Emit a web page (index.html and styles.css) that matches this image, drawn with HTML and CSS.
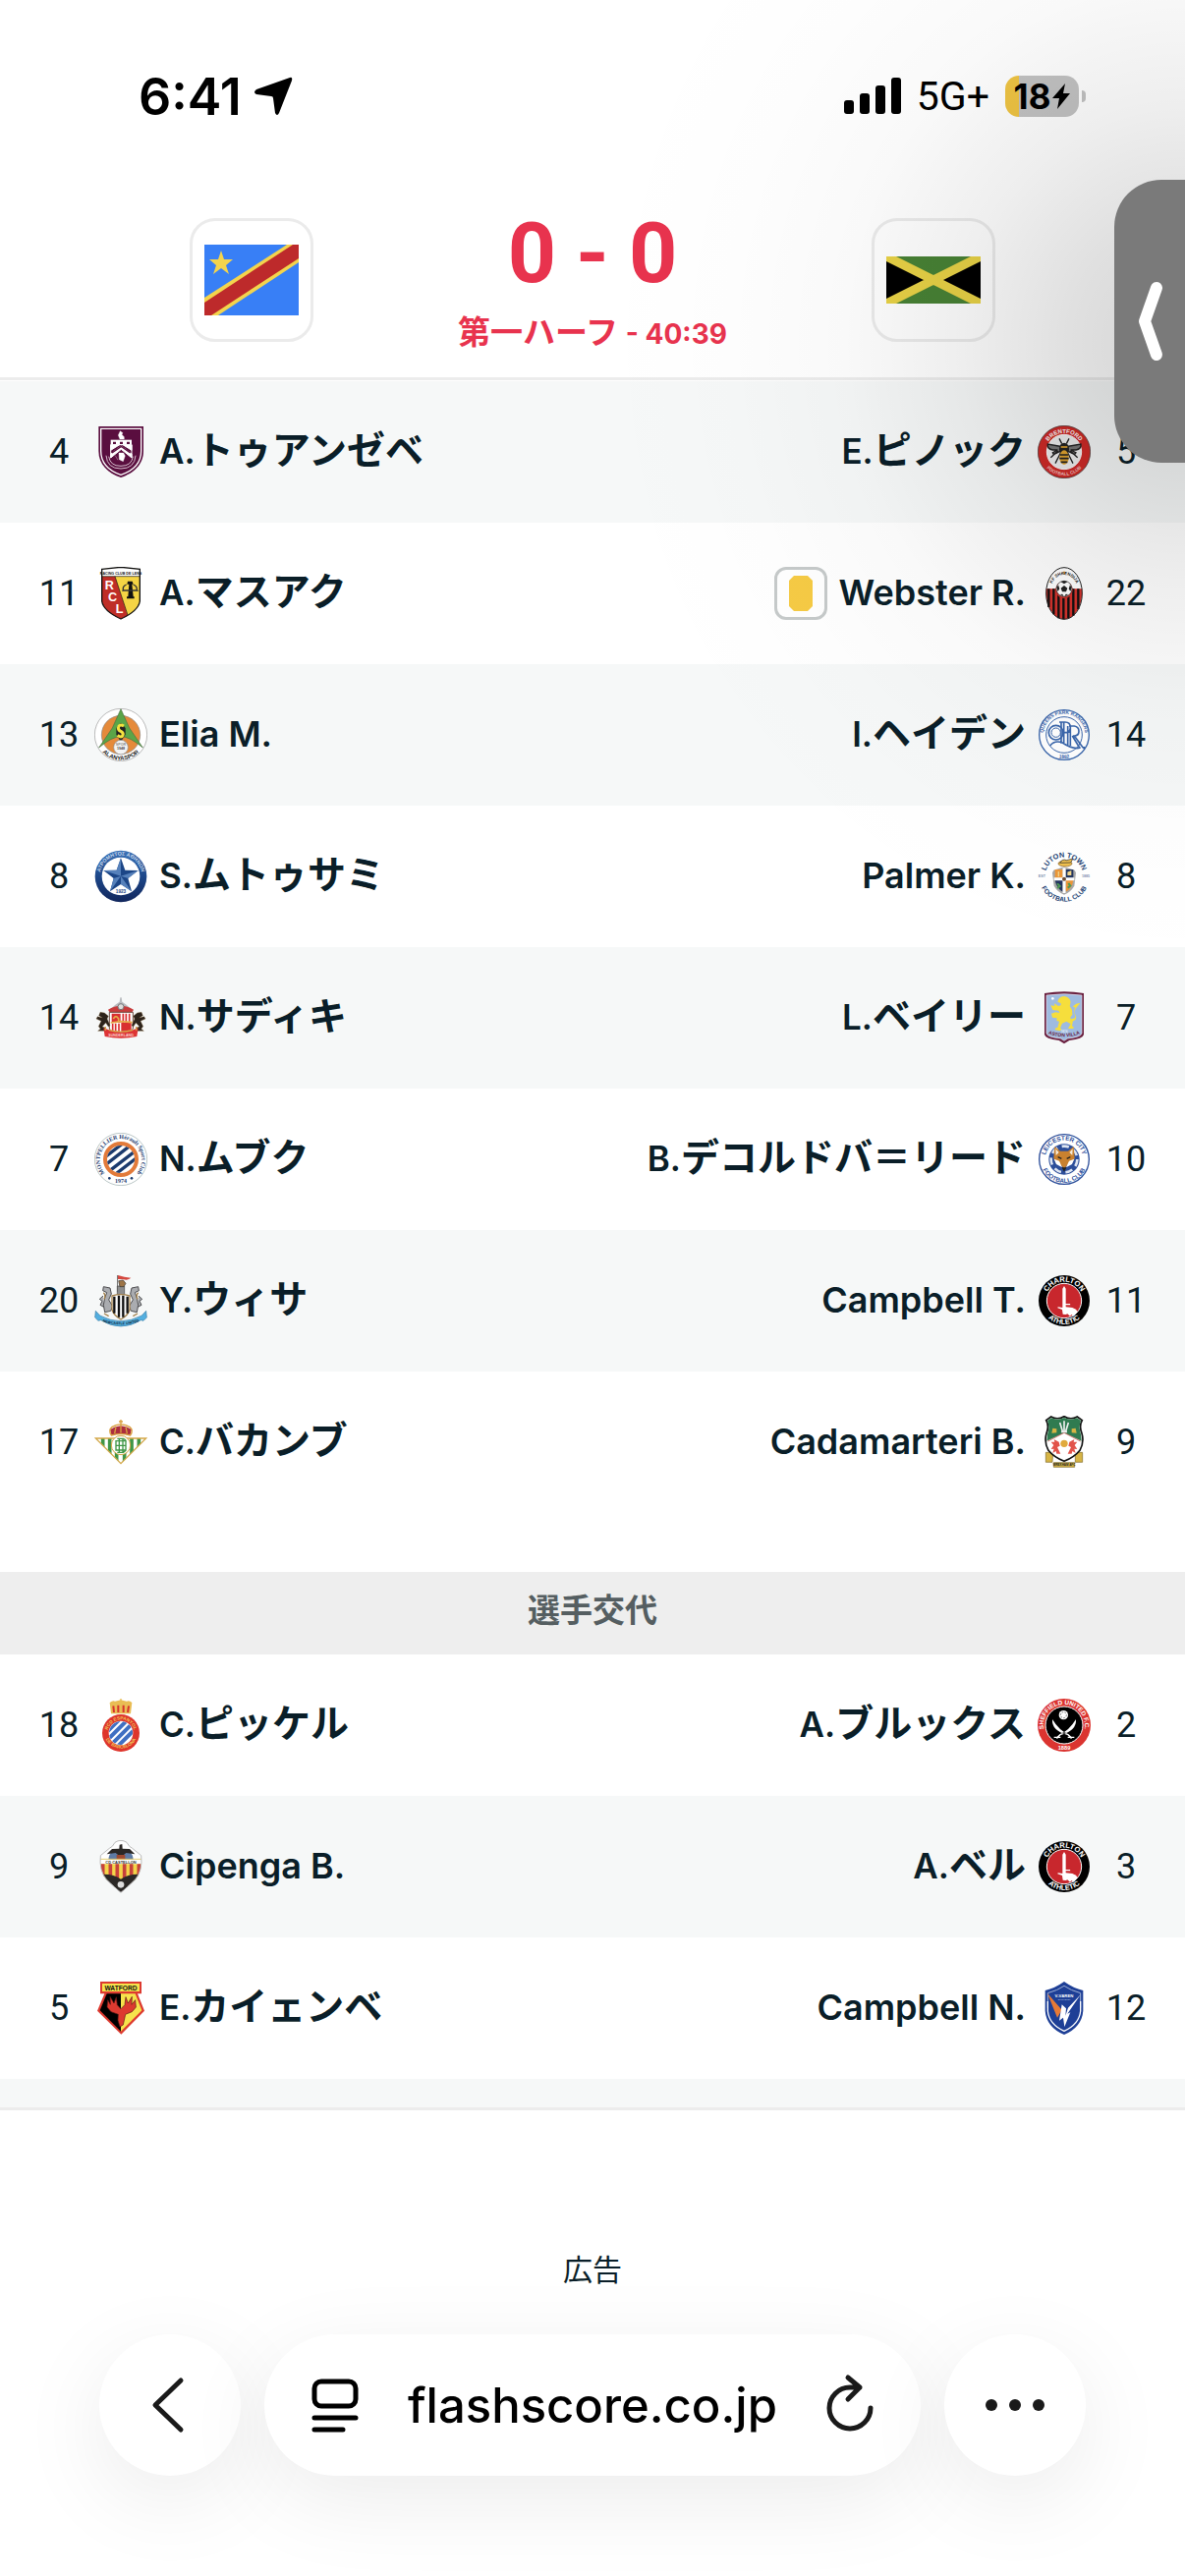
FILE: index.html
```html
<!DOCTYPE html>
<html lang="ja">
<head>
    <meta charset="UTF-8">
    <meta name="viewport" content="width=device-width, initial-scale=1.0">
    <title>コンゴ民主共和国 - ジャマイカ</title>
    <link rel="stylesheet" href="styles.css">
</head>
<body>

    <!-- Shared arcs for the lettering on round crests, plus the crest that is used twice -->
    <svg class="defs" aria-hidden="true">
        <defs>
            <path id="top-58" d="M23 81a58 58 0 0 1 116 0"/>
            <path id="top-64" d="M17 81a64 64 0 0 1 128 0"/>
            <path id="bottom-72" d="M9 81a72 72 0 0 0 144 0"/>
            <path id="bottom-77" d="M4 81a77 77 0 0 0 154 0"/>
            <g id="charlton">
                <circle cx="81" cy="81" r="78" fill="#000"/>
                <circle cx="81" cy="81" r="53" fill="#c8272d" stroke="#fff" stroke-width="3"/>
                <path d="M76 44l5-8 5 8v46h13l1 4H86v6l20 2 11 5 5 8-12 13-7-5-4 5-8-7-5 2-9-1-2-14-14-5 1-3 14 2z" fill="#fff"/>
                <text font-size="23" fill="#fff"><textPath href="#top-58" startOffset="50%">CHARLTON</textPath></text>
                <text font-size="22" fill="#fff"><textPath href="#bottom-72" startOffset="50%">ATHLETIC</textPath></text>
            </g>
        </defs>
    </svg>

    <div class="page">

        <div class="status">
            <div class="status-side">
                <span class="clock">6:41</span>
                <svg class="location" viewBox="0 0 40 40"><path d="M37 1q3-1 2 3L26 37q-2 4-4 0l-2-15q0-2-2-2L3 18q-4-2 0-5z"/></svg>
            </div>
            <div class="status-side">
                <svg class="signal" viewBox="0 0 58 38">
                    <rect x="0" y="23" width="10" height="14" rx="3"/>
                    <rect x="16" y="16" width="10" height="21" rx="3"/>
                    <rect x="32" y="8" width="10" height="29" rx="3"/>
                    <rect x="48" y="0" width="10" height="37" rx="3"/>
                </svg>
                <span class="network">5G+</span>
                <div class="battery">
                    <span>18</span>
                    <svg class="bolt" viewBox="0 0 18 26"><path d="M13 0L0 15h7L5 26 18 10h-7z"/></svg>
                </div>
            </div>
        </div>

        <header class="match">
            <a class="flag" href="#home" aria-label="コンゴ民主共和国">
                <svg viewBox="0 0 96 72">
                    <path d="M0 0h96v72H0z" fill="#387ff6"/>
                    <path d="M0 72V54L84 0h12v18L14 72z" fill="#f3d44d"/>
                    <path d="M0 72V59L90 0h6v14L7 72z" fill="#bd2a2b"/>
                    <path d="M17 6l3 9h9l-7 6 3 9-8-6-8 6 3-9-7-6h9z" fill="#f3d44d"/>
                </svg>
            </a>
            <div class="result">
                <div class="score"><span>0</span><span>-</span><span>0</span></div>
                <div class="stage">第一ハーフ <span>- 40:39</span></div>
            </div>
            <a class="flag" href="#away" aria-label="ジャマイカ">
                <svg viewBox="0 0 96 48">
                    <path d="M0 0h96v48H0z" fill="#488235"/>
                    <path d="M0 0l48 24L0 48zM96 0L48 24l48 24z" fill="#000"/>
                    <path d="M0 0l96 48M96 0L0 48" stroke="#e8d246" stroke-width="9"/>
                </svg>
            </a>
        </header>

        <ul class="players">
            <li class="row">
                <div class="player">
                    <span class="number">4</span>
                    <svg class="crest" viewBox="0 0 162 162">
                        <path d="M13 3h137v75c0 42-30 68-69 81-39-13-68-39-68-81z" fill="#5a0e3f"/>
                        <path d="M20 10h123v68c0 38-26 61-62 73-35-12-61-35-61-73z" fill="none" stroke="#fff" stroke-width="4"/>
                        <path d="M50 44h64v15H50z" fill="#fff"/>
                        <path d="M50 59h64v17L82 56 50 76zM50 87l32-24 32 24v12L82 73 50 99zM50 59v40M114 59v40" fill="#fff" stroke="#fff" stroke-width="3"/>
                        <path d="M78 42l-5-12 6-13 8 6-3 5 7 7v7zM75 84h14l5 9-6 17-12-6zM64 92l8 14" fill="#fff" stroke="#fff"/>
                        <path d="M57 50h9v7h-9zM78 50h9v7h-9zM99 50h9v7h-9z" fill="#5a0e3f"/>
                        <path d="M54 84l28-20 28 20" fill="none" stroke="#5a0e3f" stroke-width="4"/>
                        <path d="M36 92q3 40 45 40t45-40M44 95q4 29 37 29t37-29" fill="none" stroke="#d5bccc" stroke-width="3"/>
                    </svg>
                    <a class="name" href="#p1"><span>A.</span>トゥアンゼベ</a>
                </div>
                <div class="player away">
                    <span class="number">5</span>
                    <svg class="crest" viewBox="0 0 162 162">
                        <circle cx="81" cy="81" r="80" fill="#cf2a27" stroke="#333" stroke-width="2"/>
                        <circle cx="81" cy="81" r="53" fill="#eee" stroke="#fff" stroke-width="3"/>
                        <path d="M81 66L31 57q-2 15 15 18h15L46 83l3 6 24-12h16l24 12 4-6-16-8h16q17-3 15-18zM70 84l-16 32M92 84l16 32M62 78l-22 20M100 78l22 20M74 56l-8-16M88 56l8-16" fill="#777" stroke="#222" stroke-width="4"/>
                        <ellipse cx="81" cy="73" rx="15" ry="20" fill="#222"/>
                        <ellipse cx="81" cy="98" rx="14" ry="22" fill="#e1a42f"/>
                        <path d="M68 90h26M67 101h28M71 112h20" stroke="#222" stroke-width="5"/>
                        <path d="M71 66h20" stroke="#e1a42f" stroke-width="5"/>
                        <text font-size="18" fill="#fff"><textPath href="#top-58" startOffset="50%">BRENTFORD</textPath></text>
                        <text font-size="14" fill="#f5c9c8"><textPath href="#bottom-72" startOffset="50%">FOOTBALL CLUB</textPath></text>
                    </svg>
                    <a class="name" href="#p2"><span>E.</span>ピノック</a>
                </div>
            </li>
            <li class="row">
                <div class="player">
                    <span class="number">11</span>
                    <svg class="crest" viewBox="0 0 162 162">
                        <path d="M23 7l58-6 58 6v98q-5 30-58 54-53-24-58-54z" fill="#f5d444"/>
                        <path d="M23 29h40l39 120-21 10q-53-24-58-54z" fill="#bf2e27"/>
                        <path d="M23 7l58-6 58 6v22H23z" fill="#fff"/>
                        <path d="M23 29h116M63 29l39 118" stroke="#111" stroke-width="2"/>
                        <path d="M23 7l58-6 58 6v98q-5 30-58 54-53-24-58-54z" fill="none" stroke="#111" stroke-width="4"/>
                        <path d="M102 44h14l3 9h-4l4 38h3v6H99v-6h4l3-38h-6z" fill="#111"/>
                        <path d="M98 54q-14 6-9 18l-4 1M119 54q14 6 10 18l5 1M90 72h38" fill="none" stroke="#333" stroke-width="4"/>
                        <text x="81" y="23" font-size="11" fill="#111">RACING CLUB DE LENS</text>
                        <text x="46" y="70" font-size="38" fill="#fff">R</text>
                        <text x="56" y="106" font-size="38" fill="#fff">C</text>
                        <text x="77" y="140" font-size="38" fill="#fff">L</text>
                    </svg>
                    <a class="name" href="#p3"><span>A.</span>マスアク</a>
                </div>
                <div class="player away">
                    <span class="number">22</span>
                    <svg class="crest" viewBox="0 0 162 162">
                        <ellipse cx="81" cy="81" rx="55" ry="79" fill="#fff"/>
                        <path d="M26 67h110q2 36-13 64-18 29-42 29t-42-29Q24 103 26 67z" fill="#d3322c"/>
                        <path d="M34 67v56M49 67v78M64 67v90M79 67v93M94 67v90M109 67v82M124 67v62" stroke="#111" stroke-width="7"/>
                        <ellipse cx="81" cy="81" rx="55" ry="79" fill="none" stroke="#222" stroke-width="3"/>
                        <circle cx="81" cy="70" r="26" fill="#d3322c"/>
                        <circle cx="81" cy="67" r="24" fill="#fff" stroke="#222" stroke-width="2"/>
                        <path d="M81 57l10 8-4 11H75l-4-11zM71 46l10-4 10 4-10 6zM58 64l5-9 4 12-5 8zM104 64l-5-9-4 12 5 8zM68 84l8-1 4 8zM94 84l-8-1-4 8z" fill="#222"/>
                        <path d="M81 11l2 5h5l-4 3 1 5-4-3-4 3 1-5-4-3h5z" fill="#e0a64a"/>
                        <path id="shk" d="M43 62a38 38 0 0 1 76 0" fill="none"/>
                        <text font-size="13" fill="#111"><textPath href="#shk" startOffset="50%">KF SHKENDIJA</textPath></text>
                    </svg>
                    <a class="name latin" href="#p4">Webster R.</a>
                    <span class="card" role="img" aria-label="イエローカード">
                        <svg viewBox="0 0 24 36"><path d="M5 0h14l5 5v26l-5 5H5l-5-5V5z" fill="#f6cb45"/></svg>
                    </span>
                </div>
            </li>
            <li class="row">
                <div class="player">
                    <span class="number">13</span>
                    <svg class="crest" viewBox="0 0 162 162">
                        <circle cx="81" cy="81" r="80" fill="#fff" stroke="#999" stroke-width="2"/>
                        <circle cx="81" cy="81" r="59" fill="#e58a3a" stroke="#888" stroke-width="2"/>
                        <path d="M81 2l26 58 41 60q-40-34-67-34t-67 34l41-60z" fill="#5aa548" stroke="#4b6f42" stroke-width="2"/>
                        <path d="M81 44l14 16v20l-14 22-14-22V60z" fill="#222"/>
                        <path d="M90 54q-14-8-17 6 1 8 8 10 9 5 6 12-4 10-16 0" fill="none" stroke="#f4e23f" stroke-width="9"/>
                        <circle cx="81" cy="119" r="22" fill="#f4f4f4" stroke="#888" stroke-width="2"/>
                        <text x="81" y="115" font-size="11" fill="#888">SPOR</text>
                        <text x="81" y="126" font-size="11" fill="#444">1948</text>
                        <text font-size="18" fill="#222"><textPath href="#bottom-77" startOffset="50%">ALANYASPOR</textPath></text>
                    </svg>
                    <a class="name latin" href="#p5">Elia M.</a>
                </div>
                <div class="player away">
                    <span class="number">14</span>
                    <svg class="crest" viewBox="0 0 162 162">
                        <g fill="#fff" stroke="#3a66ab" stroke-width="4">
                            <circle cx="81" cy="81" r="76"/>
                            <circle cx="81" cy="81" r="55" stroke-width="3"/>
                        </g>
                        <g fill="none" stroke="#3a66ab" stroke-width="5">
                            <circle cx="56" cy="74" r="22"/>
                            <circle cx="56" cy="74" r="14" stroke-width="3"/>
                            <path d="M66 42h18q16 0 16 16t-16 16h-9M72 42v65M80 42v65M96 54h16q14 2 14 16t-14 14l26 35q8 7 4-2M92 54v60M100 54v60M106 84l22 36M38 114q14-18 38-9 32 22 55 15" />
                        </g>
                        <text font-size="15" fill="#3a66ab"><textPath href="#top-64" startOffset="50%">QUEENS PARK RANGERS</textPath></text>
                        <text font-size="15" fill="#3a66ab"><textPath href="#bottom-72" startOffset="50%">1882</textPath></text>
                    </svg>
                    <a class="name" href="#p6"><span>I.</span>ヘイデン</a>
                </div>
            </li>
            <li class="row">
                <div class="player">
                    <span class="number">8</span>
                    <svg class="crest" viewBox="0 0 162 162">
                        <linearGradient id="atromitos" x2="0" y2="1">
                            <stop stop-color="#3b73b7"/><stop offset=".5" stop-color="#1d4789"/><stop offset="1" stop-color="#11265c"/>
                        </linearGradient>
                        <circle cx="81" cy="81" r="79" fill="url(#atromitos)"/>
                        <circle cx="81" cy="81" r="58" fill="#fff"/>
                        <path d="M81 25l13 37 40 1-31 24 11 40-33-22-33 22 11-40-31-24 40-1z" fill="#1c4687"/>
                        <path d="M81 25v55L68 62zM134 63L81 80l22 7zM114 127L81 80v25zM48 127l33-47-22 7zM28 63l53 17-13-18z" fill="#5681bb"/>
                        <text font-size="16" fill="#c9d8ec"><textPath href="#top-64" startOffset="50%">ΑΤΡΟΜΗΤΟΣ ΑΘΗΝΩΝ</textPath></text>
                        <text x="81" y="132" font-size="14" fill="#1c4687">1923</text>
                    </svg>
                    <a class="name" href="#p7"><span>S.</span>ムトゥサミ</a>
                </div>
                <div class="player away">
                    <span class="number">8</span>
                    <svg class="crest" viewBox="0 0 162 162">
                        <path d="M49 62l32-10 32 10 4 8-5 40q-10 18-31 27-21-9-31-27l-5-40z" fill="#a8a8a8"/>
                        <path d="M53 60h24v26H53z" fill="#eb9638"/>
                        <path d="M86 60h23v26H86zM53 93h24v35q-18-8-24-35z" fill="#23355f"/>
                        <path d="M86 93h23q-4 26-23 35z" fill="#eb9638"/>
                        <path d="M81 55v77M50 89h62" stroke="#fff" stroke-width="9"/>
                        <path d="M60 103l8 8-8 6M94 102l6 8-8 6" stroke="#4f9a52" stroke-width="6" fill="none"/>
                        <path d="M93 69l8-3v10h-8zM64 66v16" stroke="#f1d489" stroke-width="4" fill="#f1d489"/>
                        <circle cx="81" cy="89" r="6" fill="#6c4b34"/>
                        <ellipse cx="84" cy="42" rx="21" ry="9" fill="#efc04e" stroke="#7e5925" stroke-width="2"/>
                        <path d="M68 40q8-14 20-8l20-5-7 12z" fill="#efc04e" stroke="#222" stroke-width="2"/>
                        <text font-size="22" fill="#223f73"><textPath href="#top-58" startOffset="50%">LUTON TOWN</textPath></text>
                        <text font-size="20" fill="#223f73"><textPath href="#bottom-77" startOffset="50%">FOOTBALL CLUB</textPath></text>
                        <text x="13" y="85" font-size="11" fill="#8292af">EST</text>
                        <text x="147" y="85" font-size="11" fill="#8292af">1885</text>
                    </svg>
                    <a class="name latin" href="#p8">Palmer K.</a>
                </div>
            </li>
            <li class="row">
                <div class="player">
                    <span class="number">14</span>
                    <svg class="crest" viewBox="0 0 162 162">
                        <path d="M79 19h4l2 13 11 8 20 16H46l20-16 11-8z" fill="#b9bcc0"/>
                        <path d="M42 56q39-23 78 0l-6 11H48z" fill="#c83b3c"/>
                        <circle cx="81" cy="47" r="9" fill="#ddd" stroke="#777" stroke-width="3"/>
                        <path d="M46 64h72v50q-8 14-37 14t-35-14z" fill="#fff" stroke="#6b4a3f" stroke-width="3"/>
                        <path d="M53 68h27v28H53zM82 95h31v28H82z" fill="#d92f31"/>
                        <path d="M88 68v27M97 68v27M107 68v27M56 98v22M65 98v27M75 98v28" stroke="#d92f31" stroke-width="5"/>
                        <path d="M58 84q8-14 16 0v10M50 96l32-4 34 3" fill="none" stroke="#e5ac4b" stroke-width="5"/>
                        <path d="M31 66l-13-2-4 10 11 7-15-4-4 7 15 7-8 16 6 8-8 6h20l2-10-9-3 11-12 8 12 5-4-9-20 4-8zM131 66l13-2 4 10-11 7 15-4 4 7-15 7 8 16-6 8 8 6h-20l-2-10 9-3-11-12-8 12-5-4 9-20-4-8z" fill="#2d241c" stroke="#75592e" stroke-width="1"/>
                        <path d="M28 112l14 5q39 14 78 0l14-5-4 26q-48 10-98 0z" fill="#dd3435"/>
                        <path d="M34 108v11M128 108v11M44 118q37 11 74 0" stroke="#d7a649" stroke-width="4" fill="none"/>
                        <text x="81" y="137" font-size="11" fill="#fbd5d0">SUNDERLAND</text>
                    </svg>
                    <a class="name" href="#p9"><span>N.</span>サディキ</a>
                </div>
                <div class="player away">
                    <span class="number">7</span>
                    <svg class="crest" viewBox="0 0 162 162">
                        <path d="M21 6q60-10 120 0v126q-2 13-44 18l-16 10-16-10q-42-5-44-18z" fill="#6a2140"/>
                        <path d="M27 12q54-8 108 0v116q-2 12-43 16l-11 7-11-7q-41-4-43-16z" fill="#9ebbe0" stroke="#e9dfe8" stroke-width="2"/>
                        <path d="M64 24q6-9 17-9 16 2 20 17l-3 13 7 12 1 14-7 10 9 8-3 17 6 4-3 4H93l8-14-13-8-13 6-6 14 4 4-4 5-16-3 2-6 6-1 5-19-8-2 1-8-14-2-3-12 13-4 12 2-3-7-18-2-6-14 12 2-1-8 12 8 8-2v-6l-10-5z" fill="#f6de3c"/>
                        <path d="M103 92q18-2 14-16-8-14 1-26l12-14q-12-1-20 8l-2 4 7 1q-6 12 0 26 2 9-12 9z" fill="#f6de3c"/>
                        <circle cx="46" cy="22" r="4" fill="#fff"/>
                        <text x="81" y="126" font-size="9" fill="#e4ecf7">1874</text>
                        <path id="villa" d="M30 129q51 20 102 0" fill="none"/>
                        <text font-size="15" fill="#6a2140"><textPath href="#villa" startOffset="50%">ASTON VILLA</textPath></text>
                    </svg>
                    <a class="name" href="#p10"><span>L.</span>ベイリー</a>
                </div>
            </li>
            <li class="row">
                <div class="player">
                    <span class="number">7</span>
                    <svg class="crest serif" viewBox="0 0 162 162">
                        <circle cx="81" cy="81" r="80" fill="#fff" stroke="#9aa" stroke-width="2"/>
                        <circle cx="81" cy="81" r="48" fill="#fff" stroke="#e27a3a" stroke-width="12"/>
                        <clipPath id="mhsc"><circle cx="81" cy="81" r="42"/></clipPath>
                        <path d="M20 84l70-54M30 101l82-64M43 119l84-65M60 130l84-65" clip-path="url(#mhsc)" stroke="#1b3a6d" stroke-width="10"/>
                        <path id="mont" d="M41 132a64 64 0 1 1 80 0" fill="none"/>
                        <text font-size="18" fill="#1b3a6d"><textPath href="#mont" startOffset="50%">MONTPELLIER Hérault Sport Club</textPath></text>
                        <text x="81" y="154" font-size="18" fill="#1b3a6d">1974</text>
                        <circle cx="46" cy="139" r="4" fill="#1b3a6d"/>
                        <circle cx="114" cy="139" r="4" fill="#1b3a6d"/>
                    </svg>
                    <a class="name" href="#p11"><span>N.</span>ムブク</a>
                </div>
                <div class="player away">
                    <span class="number">10</span>
                    <svg class="crest" viewBox="0 0 162 162">
                        <circle cx="81" cy="81" r="76" fill="#fff" stroke="#2c4e9a" stroke-width="4"/>
                        <circle cx="81" cy="81" r="47" fill="#2c4e9a"/>
                        <circle cx="81" cy="81" r="40" fill="none" stroke="#dfe6f2" stroke-width="8" stroke-dasharray="22 14"/>
                        <path d="M52 42l17 14h24l17-14 3 36-8 14-18 10-6 11-6-11-18-10-8-14z" fill="#c9812f"/>
                        <path d="M55 49l10 11-9 9zM107 49L97 60l9 9z" fill="#f6ead8"/>
                        <path d="M50 80l16 6 9 20-18-10zM112 80l-16 6-9 20 18-10z" fill="#fff"/>
                        <path d="M62 74l11 5M100 74l-11 5M77 108h8l-4 7z" stroke="#222" stroke-width="4"/>
                        <text font-size="19" fill="#2c4e9a"><textPath href="#top-58" startOffset="50%">LEICESTER CITY</textPath></text>
                        <text font-size="19" fill="#2c4e9a"><textPath href="#bottom-72" startOffset="50%">FOOTBALL CLUB</textPath></text>
                    </svg>
                    <a class="name" href="#p12"><span>B.</span>デコルドバ＝リード</a>
                </div>
            </li>
            <li class="row">
                <div class="player">
                    <span class="number">20</span>
                    <svg class="crest" viewBox="0 0 162 162">
                        <path d="M69 3h3v50h-3z" fill="#777"/>
                        <path d="M72 3q20 6 40 8-6 4-14 6-12-3-26-2z" fill="#d4483f"/>
                        <path d="M70 36h22v26H70z" fill="#8e8e8e" stroke="#444" stroke-width="2"/>
                        <path d="M74 20l14-2 8 10-6 10H78z" fill="#9d7446" stroke="#333" stroke-width="2"/>
                        <g fill="#aaacb0" stroke="#4d4d50" stroke-width="3">
                            <path d="M48 42l-20-4-2 12 12 6-6 16-4 22 4 22 18-4 6-14-12-20 8-18zM27 66l-11 10 8 6-6 12 11 6"/>
                            <path d="M114 42l20-4 2 12-12 6 6 16 4 22-4 22-18-4-6-14 12-20-8-18zM135 66l11 10-8 6 6 12-11 6"/>
                        </g>
                        <path d="M28 56q8 8 2 20M134 56q-8 8-2 20M30 120l14 8M132 120l-14 8" stroke="#a4824d" stroke-width="4" fill="none"/>
                        <path d="M54 66q27-8 54 0v42q-4 16-27 30-23-14-27-30z" fill="#fff" stroke="#a4824d" stroke-width="4"/>
                        <path d="M61 68v51M75 65v66M88 65v66M101 68v51" stroke="#111" stroke-width="7"/>
                        <path d="M4 112l13 14q64 34 128 0l13-14 2 20-10 10-8-2q-61 38-122 0l-8 2-10-10z" fill="#53afe0" stroke="#397da6" stroke-width="2"/>
                        <path id="nufc" d="M24 144q57 20 114 0" fill="none"/>
                        <text font-size="11" fill="#123"><textPath href="#nufc" startOffset="50%">NEWCASTLE UNITED</textPath></text>
                    </svg>
                    <a class="name" href="#p13"><span>Y.</span>ウィサ</a>
                </div>
                <div class="player away">
                    <span class="number">11</span>
                    <svg class="crest" viewBox="0 0 162 162"><use href="#charlton"/></svg>
                    <a class="name latin" href="#p14">Campbell T.</a>
                </div>
            </li>
            <li class="row">
                <div class="player">
                    <span class="number">17</span>
                    <svg class="crest" viewBox="0 0 162 162">
                        <clipPath id="betis"><path d="M4 69h154l-77 77z"/></clipPath>
                        <g clip-path="url(#betis)">
                            <path d="M0 60h162v90H0z" fill="#fff"/>
                            <path d="M26 60v90M47 60v90M68 60v90M92 60v90M114 60v90M136 60v90" stroke="#3f9646" stroke-width="11"/>
                        </g>
                        <path d="M4 69h154l-77 77z" fill="none" stroke="#d3a747" stroke-width="4"/>
                        <circle cx="81" cy="90" r="29" fill="#fff" stroke="#d3a747" stroke-width="3"/>
                        <path d="M66 77h30v28H66zM66 91h30M76 70v41M87 70v41M70 70h18q10 3 8 12M70 112h18q10-4 8-14" fill="none" stroke="#3f9646" stroke-width="4"/>
                        <path d="M52 60l-4-18q33-22 66 0l-5 18q-28-9-57 0z" fill="#ac2d3e"/>
                        <path d="M52 60q-10-16 1-25 12-8 28-9 16 1 28 9 11 9 1 25-29-9-58 0zM81 12v18M75 18h12M66 34l-4 20M96 34l4 20M81 28v24" fill="none" stroke="#d9a03f" stroke-width="4"/>
                    </svg>
                    <a class="name" href="#p15"><span>C.</span>バカンブ</a>
                </div>
                <div class="player away">
                    <span class="number">9</span>
                    <svg class="crest" viewBox="0 0 162 162">
                        <path d="M25 112h22l-2 30H25zM115 112h22v30h-22zM49 143h64v14H49z" fill="#d6b444" stroke="#7c6623" stroke-width="2"/>
                        <path d="M26 14l15-11q20 11 40-1 20 12 40 1l15 11q-10 17-1 40 8 26-6 52-18 22-48 33-30-11-48-33-14-26-6-52 9-23-1-40z" fill="#fff" stroke="#111" stroke-width="5"/>
                        <path d="M30 15l12-8q20 9 39-1 19 10 39 1l12 8q-8 20 0 42l2 20-53-25-53 25 2-20q8-22 0-42z" fill="#2f7b50"/>
                        <path d="M31 78l50-26 50 26" fill="none" stroke="#b8322c" stroke-width="2"/>
                        <path d="M81 16v31M68 21l8 26M94 21l-8 26M72 49h18" stroke="#eee" stroke-width="5"/>
                        <path d="M46 38l12 2v12l-15 1zM116 38l-12 2v12l15 1z" fill="#d6b444"/>
                        <circle cx="81" cy="85" r="11" fill="#e0aa3c"/>
                        <path d="M50 72l15 8 3 12-8 4 10 20H58l-2-8-10 6 4-13-9 1 8-12-8-10h11zM112 72l-15 8-3 12 8 4-10 20h12l2-8 10 6-4-13 9 1-8-12 8-10h-11z" fill="#e2534a"/>
                        <text x="81" y="154" font-size="9" fill="#222">WREXHAM AFC</text>
                    </svg>
                    <a class="name latin" href="#p16">Cadamarteri B.</a>
                </div>
            </li>
        </ul>

        <h2 class="section">選手交代</h2>

        <ul class="players subs">
            <li class="row">
                <div class="player">
                    <span class="number">18</span>
                    <svg class="crest" viewBox="0 0 162 162">
                        <path d="M51 46l-4-34q10-8 16-4l18-4 18 4q8-4 16 4l-4 34z" fill="#e9bd54"/>
                        <path d="M60 42l-2-20M73 42V20M89 42V20M102 42l3-20" stroke="#d8322b" stroke-width="6"/>
                        <path d="M81 0v12" stroke="#e9bd54" stroke-width="4"/>
                        <circle cx="81" cy="105" r="57" fill="#de352c"/>
                        <circle cx="81" cy="105" r="37" fill="#fff"/>
                        <clipPath id="rcde"><circle cx="81" cy="105" r="36"/></clipPath>
                        <path d="M30 110l60-60M40 126l66-66M53 139l66-66M69 148l64-64" clip-path="url(#rcde)" stroke="#3f6fc2" stroke-width="12"/>
                        <path id="rcde-t" d="M40 105a41 41 0 0 1 82 0" fill="none"/>
                        <path id="rcde-b" d="M29 100a52 52 0 0 0 104 0" fill="none"/>
                        <text font-size="14" fill="#f0c557"><textPath href="#rcde-t" startOffset="50%">RCD ESPANYOL</textPath></text>
                        <text font-size="14" fill="#f0c557"><textPath href="#rcde-b" startOffset="50%">DE BARCELONA</textPath></text>
                    </svg>
                    <a class="name" href="#p17"><span>C.</span>ピッケル</a>
                </div>
                <div class="player away">
                    <span class="number">2</span>
                    <svg class="crest" viewBox="0 0 162 162">
                        <circle cx="81" cy="81" r="81" fill="#db3430"/>
                        <circle cx="81" cy="81" r="57" fill="#000" stroke="#fff" stroke-width="3"/>
                        <circle cx="79" cy="50" r="14" fill="#fff"/>
                        <circle cx="79" cy="50" r="9" fill="none" stroke="#333" stroke-width="2" stroke-dasharray="5 4"/>
                        <path d="M45 63q-3 34 46 48l11 12 4-4-11-10q-28-10-50-46zM117 63q3 34-46 48l-11 12-4-4 11-10q28-10 50-46z" fill="#fff"/>
                        <path d="M50 118h20M92 118h20" stroke="#fff" stroke-width="4"/>
                        <path id="sufc" d="M22 103a63 63 0 1 1 118 0" fill="none"/>
                        <text font-size="19" fill="#fff"><textPath href="#sufc" startOffset="50%">SHEFFIELD UNITED F.C.</textPath></text>
                        <text x="81" y="157" font-size="17" fill="#fff">1889</text>
                    </svg>
                    <a class="name" href="#p18"><span>A.</span>ブルックス</a>
                </div>
            </li>
            <li class="row">
                <div class="player">
                    <span class="number">9</span>
                    <svg class="crest" viewBox="0 0 162 162">
                        <clipPath id="cast"><path d="M19 47l27-22q10-4 17-18 18-12 36 0 7 14 17 18l27 22q5 45-17 72-29 28-45 41-16-13-45-41-22-27-17-72z"/></clipPath>
                        <g clip-path="url(#cast)">
                            <path d="M0 0h162v162H0z" fill="#fff"/>
                            <path d="M43 60q2-32 38-32t38 32z" fill="#5e7ba5"/>
                            <path d="M77 14l8-2 1 14 22 1 16 16-27-4-12 10H77L65 39l-27 4 16-16 22-1z" fill="#2b2826"/>
                            <path d="M68 45h26v15H68z" fill="#9e4a31"/>
                            <path d="M17 73h128v50H17z" fill="#f3d54a"/>
                            <path d="M26 73v40M49 73v48M70 73v48M92 73v48M113 73v48M136 73v40" stroke="#c7413b" stroke-width="11"/>
                            <path d="M17 105q38-4 64 14 26-18 64-14v57H17z" fill="#2b2826"/>
                            <path d="M17 58h128" stroke="#e6cf70" stroke-width="3"/>
                        </g>
                        <circle cx="81" cy="136" r="10" fill="#ddd"/>
                        <path d="M19 47l27-22q10-4 17-18 18-12 36 0 7 14 17 18l27 22q5 45-17 72-29 28-45 41-16-13-45-41-22-27-17-72z" fill="none" stroke="#bbb" stroke-width="3"/>
                        <text x="81" y="71" font-size="12" fill="#333">CD CASTELLON</text>
                    </svg>
                    <a class="name latin" href="#p19">Cipenga B.</a>
                </div>
                <div class="player away">
                    <span class="number">3</span>
                    <svg class="crest" viewBox="0 0 162 162"><use href="#charlton"/></svg>
                    <a class="name" href="#p20"><span>A.</span>ベル</a>
                </div>
            </li>
            <li class="row">
                <div class="player">
                    <span class="number">5</span>
                    <svg class="crest" viewBox="0 0 162 162">
                        <path d="M18 0h126v37h-12l21 52-71 72L9 89l22-52H18z" fill="#dd3a30"/>
                        <path d="M24 6h114v24H24z" fill="#f6e34c"/>
                        <path d="M38 37h43v115L17 88z" fill="#000"/>
                        <path d="M81 37h44l20 51-64 64z" fill="#f6e34c"/>
                        <path d="M73 100l-22-8-12-14 2-22 8 14-1-24 12 20 7-19 3 24 11 12 12-12 3-24 7 19 12-20-1 24 11-14 2 22-12 14-20 8-3 14-4 18-10 6-6-20z" fill="#dd3a30" stroke="#5b1713" stroke-width="2"/>
                        <text x="81" y="26" font-size="20" fill="#111">WATFORD</text>
                    </svg>
                    <a class="name" href="#p21"><span>E.</span>カイェンベ</a>
                </div>
                <div class="player away">
                    <span class="number">12</span>
                    <svg class="crest" viewBox="0 0 162 162">
                        <path d="M81 0q28 20 58 27v62q-4 50-58 73-54-23-58-73V27Q53 20 81 0z" fill="#1e3f96"/>
                        <path d="M31 80V35q30-8 50-22 20 14 50 22v45" fill="none" stroke="#9fb0d6" stroke-width="3"/>
                        <path d="M31 60v30q4 40 50 61 46-21 50-61V60" fill="none" stroke="#fff" stroke-width="4"/>
                        <path d="M30 36l44 50-14 24z" fill="#e77a36"/>
                        <path d="M74 70l-8 49 12-9 4 28 18-44-9 4 40-58-38 40-8 24 2-22z" fill="#fff"/>
                        <text x="81" y="48" font-size="13" fill="#fff">V-VAREN</text>
                        <text x="81" y="57" font-size="7" fill="#b9c6e4">NAGASAKI</text>
                    </svg>
                    <a class="name latin" href="#p22">Campbell N.</a>
                </div>
            </li>
            <li class="row peek"></li>
        </ul>

        <p class="ad">広告</p>

        <nav class="toolbar">
            <button class="tool" type="button" aria-label="戻る">
                <svg class="icon" viewBox="0 0 56 56"><path d="M39 3L13 28l26 25" /></svg>
            </button>
            <div class="address">
                <button class="plain" type="button" aria-label="ページメニュー">
                    <svg class="icon thick" viewBox="0 0 56 56"><rect x="7" y="4" width="42" height="25" rx="7"/><path d="M7 41h42M7 53h29"/></svg>
                </button>
                <input type="text" value="flashscore.co.jp" aria-label="アドレス">
                <button class="plain" type="button" aria-label="再読み込み">
                    <svg class="icon" viewBox="0 0 56 56"><path d="M49 31a21 21 0 1 1-21-21h10M26 0l12 10-12 12"/></svg>
                </button>
            </div>
            <button class="tool" type="button" aria-label="その他">
                <svg class="icon dots" viewBox="0 0 60 56"><circle cx="6" cy="28" r="6"/><circle cx="30" cy="28" r="6"/><circle cx="54" cy="28" r="6"/></svg>
            </button>
        </nav>

        <div class="shade"></div>
        <button class="drawer" type="button" aria-label="パネルを開く">
            <svg viewBox="0 0 24 84"><path d="M19 8L7 42l12 34"/></svg>
        </button>
    </div>

</body>
</html>
```

FILE: styles.css
```css
* {
    box-sizing: border-box;
}
body {
    margin: 0;
    background: #fff;
    color: #0a1e28;
    font-family: Inter, "Noto Sans CJK JP", sans-serif;
}
button {
    padding: 0;
    border: 0;
    background: none;
}
a {
    color: inherit;
    text-decoration: none;
}
svg text {
    font-family: "Liberation Sans", sans-serif;
    font-weight: 700;
    text-anchor: middle;
}
.defs {
    position: absolute;
    width: 0;
    height: 0;
}
.page {
    position: relative;
    display: flex;
    flex-direction: column;
    min-height: 100vh;
    overflow: hidden;
}

/* status bar */
.status {
    display: flex;
    justify-content: space-between;
    align-items: center;
    height: 196px;
    padding: 0 108px 0 141px;
    color: #000;
}
.status-side {
    display: flex;
    align-items: center;
    gap: 16px;
}
.clock {
    font-size: 52px;
    font-weight: 600;
}
.location {
    width: 40px;
    height: 40px;
    margin-left: -4px;
}
.signal {
    width: 58px;
    height: 38px;
}
.network {
    font-family: Roboto, sans-serif;
    font-size: 41px;
}
.battery {
    position: relative;
    display: flex;
    align-items: center;
    justify-content: center;
    gap: 2px;
    width: 75px;
    height: 42px;
    border-radius: 14px;
    background: linear-gradient(90deg, #efc443 14px, #c2c2c2 14px);
    font-size: 35px;
    font-weight: 700;
}
.battery::after {
    content: "";
    position: absolute;
    top: 15px;
    right: -7px;
    width: 4px;
    height: 12px;
    border-radius: 0 4px 4px 0;
    background: #c2c2c2;
}
.bolt {
    width: 18px;
    height: 26px;
}

/* match header */
.match {
    display: grid;
    grid-template-columns: 1fr 1fr 1fr;
    justify-items: center;
    align-items: start;
    height: 191px;
    margin-bottom: 1px;
    padding: 26px 82px 0;
    border-bottom: 3px solid #ececec;
}
.flag {
    display: flex;
    align-items: center;
    justify-content: center;
    width: 126px;
    height: 126px;
    border: 3px solid #ebebeb;
    border-radius: 26px;
    background: #fff;
}
.flag svg {
    width: 96px;
}
.result {
    color: #e8334e;
    text-align: center;
    white-space: nowrap;
}
.score {
    display: flex;
    justify-content: center;
    gap: 20px;
    font-family: Roboto, sans-serif;
    font-size: 86px;
    font-weight: 700;
    line-height: 72px;
}
.stage {
    padding-top: 20px;
    font-size: 33px;
    font-weight: 700;
    line-height: 48px;
}
.stage span {
    font-size: 28px;
}

/* line-ups */
.players {
    margin: 0;
    padding: 0;
    list-style: none;
}
.row {
    display: flex;
    justify-content: space-between;
    align-items: center;
    height: 144px;
    padding: 0 36px;
}
.players .row:nth-child(odd),
.subs .row:nth-child(even) {
    background: #f6f8f8;
}
.subs .row:nth-child(odd) {
    background: #fff;
}
.row.peek {
    height: 32px;
    border-bottom: 3px solid #ececec;
}
.player {
    display: flex;
    align-items: center;
    gap: 12px;
}
.away {
    flex-direction: row-reverse;
}
.number {
    width: 48px;
    font-family: Roboto, sans-serif;
    font-size: 36px;
    text-align: center;
}
.crest {
    width: 54px;
    height: 54px;
}
.crest.serif text {
    font-family: "Liberation Serif", serif;
}
.name {
    padding-bottom: 4px;
    font-size: 39px;
    font-weight: 700;
    line-height: 54px;
}
.name span {
    font-size: 35px;
    font-weight: 600;
}
.name.latin {
    padding-bottom: 2px;
    font-size: 36px;
    font-weight: 600;
}
.card {
    display: flex;
    align-items: center;
    justify-content: center;
    width: 54px;
    height: 54px;
    border: 3px solid #c6caca;
    border-radius: 12px;
    background: #fff;
}
.card svg {
    width: 24px;
    height: 36px;
}
.section {
    margin: 60px 0 0;
    padding: 15px 0 21px;
    background: #eee;
    color: #555e61;
    font-size: 33px;
    font-weight: 700;
    line-height: 48px;
    text-align: center;
}
.ad {
    margin: 138px 0 0;
    font-size: 30px;
    line-height: 48px;
    text-align: center;
}

/* browser bar */
.toolbar {
    display: flex;
    gap: 24px;
    margin-top: auto;
    padding: 0 101px 102px;
}
.tool,
.address {
    display: flex;
    align-items: center;
    justify-content: center;
    height: 144px;
    border-radius: 72px;
    background: #fff;
    box-shadow: 0 24px 90px rgba(0, 0, 0, 0.08);
}
.tool {
    flex: 0 0 144px;
}
.address {
    flex: 1;
    min-width: 0;
    padding: 0 44px;
}
.address input {
    flex: 1;
    min-width: 0;
    padding: 0;
    border: 0;
    background: none;
    color: #000;
    font: 500 49px Inter, sans-serif;
    text-align: center;
}
.plain {
    display: flex;
}
.icon {
    width: 56px;
    height: 56px;
    fill: none;
    stroke: #1a1a1a;
    stroke-width: 5;
    stroke-linecap: round;
    stroke-linejoin: round;
    overflow: visible;
}
.icon.thick {
    stroke: #000;
}
.icon.dots {
    width: 60px;
    fill: #1a1a1a;
    stroke: none;
}

/* side drawer handle with the shade it casts over the page */
.shade {
    position: absolute;
    inset: 0 0 auto auto;
    width: 600px;
    height: 1010px;
    background: radial-gradient(600px 640px at 100% 350px, rgba(0, 0, 0, 0.17), rgba(0, 0, 0, 0.12) 20%, rgba(0, 0, 0, 0.065) 38%, rgba(0, 0, 0, 0.025) 58%, rgba(0, 0, 0, 0.008) 78%, transparent);
    pointer-events: none;
}
.drawer {
    position: absolute;
    top: 183px;
    right: 0;
    display: flex;
    align-items: center;
    width: 72px;
    height: 288px;
    padding-left: 24px;
    border-radius: 48px 0 0 48px;
    background: #7a7a7a;
}
.drawer svg {
    width: 24px;
    height: 84px;
    fill: none;
    stroke: #fff;
    stroke-width: 12;
    stroke-linecap: round;
    stroke-linejoin: round;
    overflow: visible;
}
```
